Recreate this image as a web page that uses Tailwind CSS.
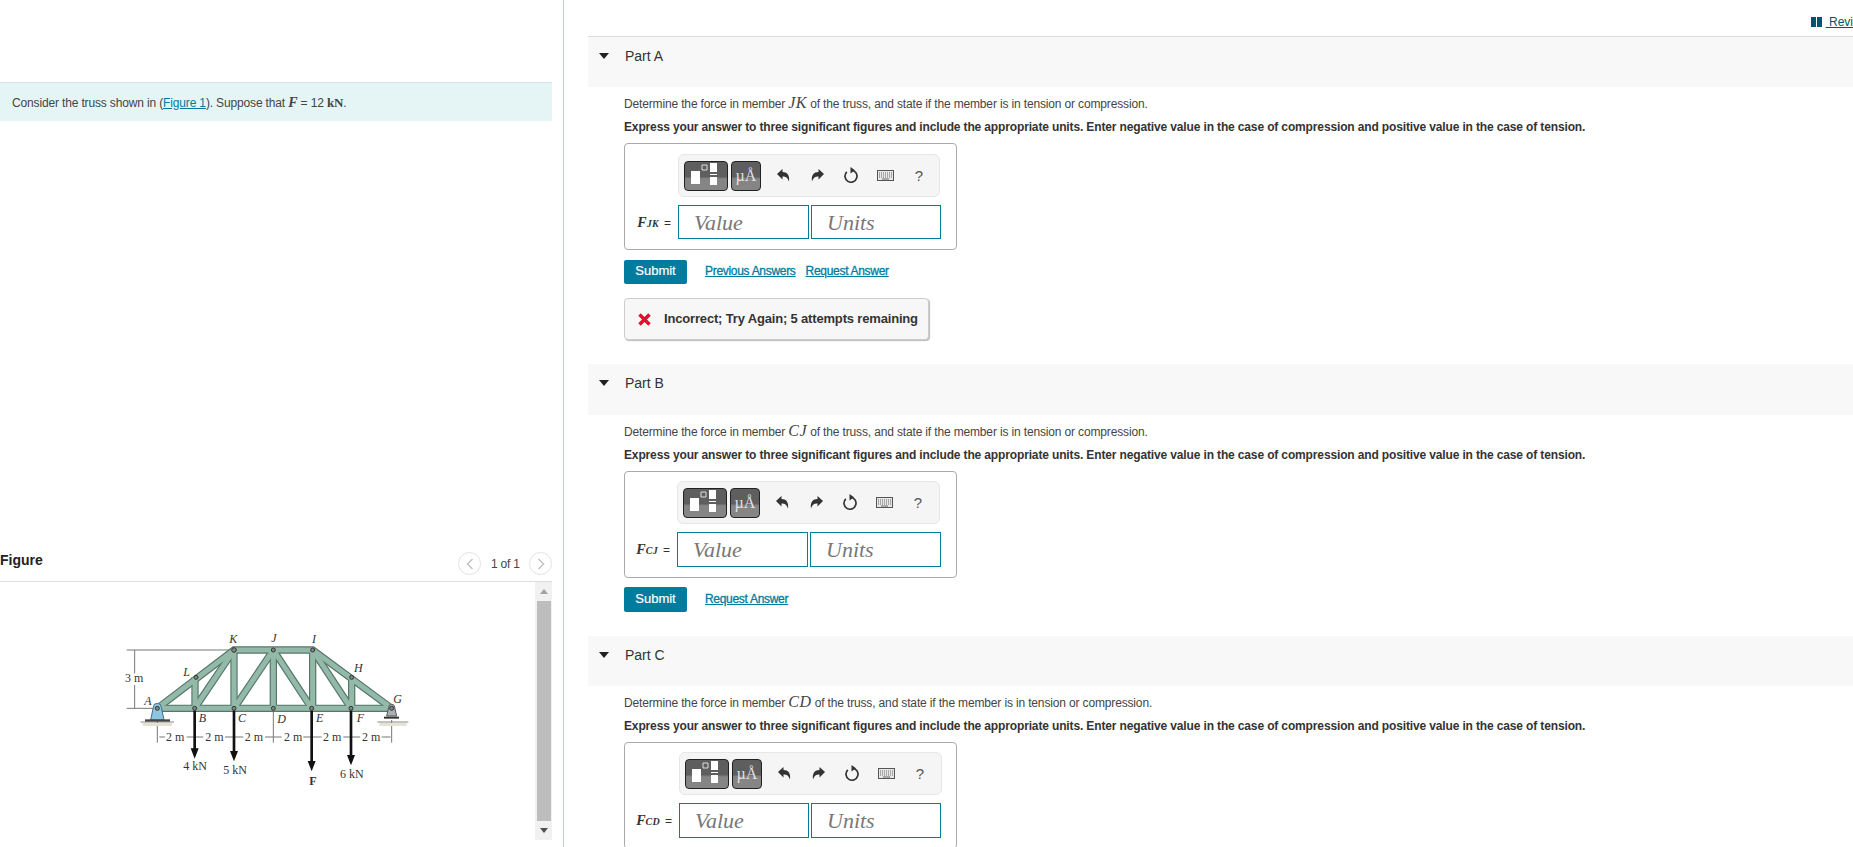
<!DOCTYPE html>
<html lang="en">
<head>
    <meta charset="UTF-8">
    <title>Truss homework</title>
    <script src="https://cdn.jsdelivr.net/npm/@tailwindcss/browser@4"></script>
</head>
<body class="bg-white text-[#444] font-['Liberation_Sans',Arial,sans-serif] text-[12px]">
<div class="flex h-[847px] overflow-hidden">

    <!-- Left column -->
    <aside class="w-[564px] shrink-0 border-r border-[#b9cbe0] pr-[11px] pt-[82px]">
        <div class="h-[39px] bg-[#e5f5f6] border-t border-[#d5e3e5] pl-[12px] flex items-center">
            <p class="tracking-[-0.15px]">Consider the truss shown in (<a class="text-[#007c9e] underline">Figure 1</a>). Suppose that <span class="font-['Liberation_Serif',serif] italic font-bold text-[14px]">F</span> = 12 <span class="font-['Liberation_Serif',serif] font-bold text-[13px]">kN</span>.</p>
        </div>

        <div class="mt-[425px] h-[36px] border-b border-[#ddd] flex items-center justify-between">
            <h2 class="text-[14px] font-bold text-[#222] pb-[6px]">Figure</h2>
            <div class="flex items-center">
                <span class="w-[23px] h-[23px] rounded-full border border-[#e2e2e2] flex items-center justify-center">
                    <svg width="8" height="12" viewBox="0 0 8 12" fill="none" stroke="#c4c4c4" stroke-width="1.6"><path d="M6.5 1 1.5 6l5 5"/></svg>
                </span>
                <span class="mx-[10px] w-[28px] whitespace-nowrap tracking-[-0.2px]">1 of 1</span>
                <span class="w-[23px] h-[23px] rounded-full border border-[#e2e2e2] flex items-center justify-center">
                    <svg width="8" height="12" viewBox="0 0 8 12" fill="none" stroke="#c4c4c4" stroke-width="1.6"><path d="M1.5 1l5 5-5 5"/></svg>
                </span>
            </div>
        </div>

        <div class="flex h-[258px]">
            <div class="flex-1 pl-[100px] pt-[38px]">
                <svg width="320" height="180" viewBox="0 0 960 540">
                    <defs>
                        <g id="members">
                            <path d="M172 265H875"/>
                            <path d="M285 172V265M402 90V265M520 90V265M638 90V265M755 172V265"/>
                            <path d="M284 265 402 90M402 265 520 90M520 90 635 265M638 90 753 265"/>
                            <path d="M172 265 402 90H638L875 265"/>
                        </g>
                    </defs>
                    <!-- dimension lines -->
                    <g stroke="#777" stroke-width="3" fill="none">
                        <path d="M80 90H395M80 265H170M104 90V160M104 195V265"/>
                        <path d="M172 300V368M875 300V368M520 275V368M178 351H195M260 351H310M375 351H430M495 351H545M610 351H665M730 351H780M845 351H872"/>
                    </g>
                    <!-- ground -->
                    <path d="M122 306H222M832 306H925" stroke="#8a8a7c" stroke-width="3"/>
                    <path d="M128 309H216V318H128ZM838 309H920V318H838Z" fill="#e4e2d4"/>
                    <!-- truss -->
                    <use href="#members" fill="none" stroke="#56766b" stroke-width="22"/>
                    <use href="#members" fill="none" stroke="#93b9a9" stroke-width="15"/>
                    <!-- supports -->
                    <path d="M160 262a12 12 0 0 1 24 0l8 38h-40Z" fill="#8fc6df" stroke="#3f6f86" stroke-width="3"/>
                    <path d="M135 298H210V305H135Z" fill="#444"/>
                    <path d="M866 262a9 9 0 0 1 18 0l6 26h-30Z" fill="#a9b1b5" stroke="#555" stroke-width="3"/>
                    <path d="M852 290H897V296H852Z" fill="#333"/>
                    <g fill="#7c8a86" stroke="#333" stroke-width="3">
                        <circle cx="172" cy="265" r="6"/><circle cx="288" cy="172" r="6"/><circle cx="402" cy="90" r="7"/>
                        <circle cx="520" cy="90" r="6"/><circle cx="638" cy="90" r="6"/><circle cx="755" cy="172" r="6"/>
                        <circle cx="875" cy="265" r="6"/><circle cx="284" cy="265" r="6"/><circle cx="402" cy="265" r="6"/>
                        <circle cx="520" cy="265" r="6"/><circle cx="635" cy="265" r="6"/><circle cx="753" cy="265" r="6"/>
                    </g>
                    <!-- loads -->
                    <g stroke="#111" stroke-width="8">
                        <path d="M284 272V392M402 272V400M635 272V430M753 272V412"/>
                    </g>
                    <path d="M272 385H296L284 416ZM390 393H414L402 424ZM623 423H647L635 454ZM741 405H765L753 436Z" fill="#111"/>
                    <g font-family="Liberation Serif, serif" font-size="36" fill="#333">
                        <text x="75" y="186">3 m</text>
                        <text x="198" y="362">2 m</text>
                        <text x="316" y="362">2 m</text>
                        <text x="434" y="362">2 m</text>
                        <text x="552" y="362">2 m</text>
                        <text x="669" y="362">2 m</text>
                        <text x="786" y="362">2 m</text>
                        <text x="250" y="449">4 kN</text>
                        <text x="370" y="462">5 kN</text>
                        <text x="720" y="473">6 kN</text>
                        <text x="628" y="495" font-weight="bold">F</text>
                        <g font-style="italic">
                            <text x="133" y="254">A</text>
                            <text x="296" y="305">B</text>
                            <text x="414" y="305">C</text>
                            <text x="532" y="308">D</text>
                            <text x="648" y="305">E</text>
                            <text x="770" y="305">F</text>
                            <text x="880" y="248">G</text>
                            <text x="762" y="155">H</text>
                            <text x="636" y="68">I</text>
                            <text x="514" y="66">J</text>
                            <text x="388" y="68">K</text>
                            <text x="250" y="168">L</text>
                        </g>
                    </g>
                </svg>
            </div>
            <!-- scrollbar -->
            <div class="w-[17px] bg-[#f1f1f1] flex flex-col items-center justify-between py-[7px]">
                <svg width="8" height="5" viewBox="0 0 8 5"><path d="M4 0 8 5H0Z" fill="#a3a3a3"/></svg>
                <div class="w-[14px] h-[220px] bg-[#bdbdbd]"></div>
                <svg width="8" height="5" viewBox="0 0 8 5"><path d="M0 0H8L4 5Z" fill="#505050"/></svg>
            </div>
        </div>
    </aside>

    <!-- Right column -->
    <main class="flex-1 min-w-0 pl-[24px]">
        <div class="h-[36px] -ml-[24px] flex justify-end items-start pt-[15px]">
            <a class="flex items-center text-[12px] leading-[14px] text-[#00566e] underline">
                <svg class="mr-[4px]" width="11" height="10" viewBox="0 0 11 10"><path d="M0 0H5V10H0ZM6 0H11V10H6Z" fill="#00566e"/></svg>
                <span>&nbsp;Revi</span>
            </a>
        </div>
        <div id="parts"></div>
    </main>
</div>

<script>
    // small per-part offsets, the three answer boxes don't line up exactly in the original
    const parts = [
        { name: "Part A", member: "JK", links: ["Previous Answers", "Request Answer"], wrong: true, head: "h-[51px] border-t border-[#ddd]",
          barTop: "mt-[10px]", label: "w-[53px]", barW: "w-[262px]", inputH: "h-[34px]", valueW: "w-[131px]", unitsW: "w-[130px]", submitTop: "mt-[10px]", submitH: "h-[24px]" },
        { name: "Part B", member: "CJ", links: ["Request Answer"], wrong: false, head: "h-[51px]",
          barTop: "mt-[9px]", label: "w-[52px]", barW: "w-[263px]", inputH: "h-[35px]", valueW: "w-[131px]", unitsW: "w-[131px]", submitTop: "mt-[9px]", submitH: "h-[25px]" },
        // the page is cut off below the inputs of part C
        { name: "Part C", member: "CD", links: [], wrong: false, cut: true, head: "h-[50px]",
          barTop: "mt-[9px]", label: "w-[54px]", barW: "w-[263px]", inputH: "h-[35px]", valueW: "w-[130px]", unitsW: "w-[130px]" }
    ];

    function toolbar(part) {
        return `
        <div class="${part.label} pr-0"></div>
        <div class="${part.barW} h-[43px] bg-[#f5f5f5] border border-[#e6e6e6] rounded-[6px] flex items-center pl-[5px]">
            <span class="w-[44px] h-[30px] rounded-[4px] border border-[#222] bg-[linear-gradient(#5e5e5e_52%,#858585_60%)] shrink-0">
                <svg width="42" height="28" viewBox="0 0 42 28"><path d="M6 9H15V22H6ZM25 1H32V10H25ZM25 12H32V13H25ZM25 15H32V23H25Z" fill="#fff"/><path d="M17 3H22V8H17Z" fill="none" stroke="#ddd"/></svg>
            </span>
            <span class="ml-[3px] w-[30px] h-[30px] rounded-[4px] border border-[#222] bg-[linear-gradient(#5e5e5e_52%,#858585_60%)] shrink-0 flex items-center justify-center font-['Liberation_Serif',serif] text-[16px] leading-none text-[#e2e2e2]">µÅ</span>
            <span class="ml-[5px] w-[34px] flex justify-center">
                <svg width="13" height="13" viewBox="0 0 13 13"><path d="M0 5 5.500 0V3C10 3 13 6 12 12.500 10.500 8.500 9 7.500 5.500 7.500V10.500Z" fill="#333"/></svg>
            </span>
            <span class="w-[34px] flex justify-center">
                <svg width="13" height="13" viewBox="0 0 13 13"><path d="M13 5 7.500 0V3C3 3 0 6 1 12.500 2.500 8.500 4 7.500 7.500 7.500V10.500Z" fill="#333"/></svg>
            </span>
            <span class="w-[34px] flex justify-center">
                <svg width="15" height="17" viewBox="0 0 15 17" fill="none"><path d="M7 3.200A6 6 0 1 1 2.800 4.900" stroke="#333" stroke-width="1.700"/><path d="M6.500 0 11 3.200 6.500 6.500Z" fill="#333"/></svg>
            </span>
            <span class="w-[34px] flex justify-center">
                <svg width="17" height="11" viewBox="0 0 17 11"><rect x=".5" y=".5" width="16" height="10" fill="#e8e8e8" stroke="#555"/><path d="M2 3H15M2 5H15M2 7H15" stroke="#666" stroke-dasharray="1 1"/><path d="M5 9H12" stroke="#666"/></svg>
            </span>
            <span class="w-[34px] text-center text-[15px] leading-none text-[#555]">?</span>
        </div>`;
    }

    function renderParts() {
        const box = document.getElementById("parts");
        parts.forEach(part => {
            const div = document.createElement("section");
            div.className = "mb-[24px]";
            div.innerHTML = `
                <div class="${part.head} bg-[#f8f8f8] flex items-start pt-[10px]">
                    <svg class="ml-[11px] mt-[6px]" width="10" height="6" viewBox="0 0 10 6"><path d="M0 0H10L5 6Z" fill="#222"/></svg>
                    <span class="ml-[16px] text-[14px] leading-[18px] text-[#333]">${part.name}</span>
                </div>
                <div class="pl-[36px]">
                    <p class="mt-[10px] h-[14px] leading-[14px] tracking-[-0.15px]">Determine the force in member <span class="font-['Liberation_Serif',serif] italic text-[16px] leading-[10px] tracking-[0.5px]">${part.member}</span> of the truss, and state if the member is in tension or compression.</p>
                    <p class="mt-[9px] h-[14px] leading-[14px] font-bold tracking-[-0.14px] text-[#333]">Express your answer to three significant figures and include the appropriate units. Enter negative value in the case of compression and positive value in the case of tension.</p>
                    <div class="mt-[9px] w-[333px] h-[107px] border border-[#aaa] rounded-[4px]">
                        <div class="flex ${part.barTop}">${toolbar(part)}</div>
                        <div class="flex items-center mt-[8px]">
                            <span class="${part.label} pr-[7px] text-right whitespace-nowrap text-[#333]"><span class="font-['Liberation_Serif',serif] italic font-bold text-[14px]">F</span><span class="font-['Liberation_Serif',serif] italic font-bold text-[10px] tracking-[0.3px]">${part.member}</span><span class="ml-[5px]">=</span></span>
                            <div class="${part.valueW} ${part.inputH} border border-[#007c9e] pl-[15px] flex items-center font-['Liberation_Serif',serif] italic text-[22px] text-[#777]">Value</div>
                            <div class="ml-[2px] ${part.unitsW} ${part.inputH} border border-[#007c9e] pl-[15px] flex items-center font-['Liberation_Serif',serif] italic text-[22px] text-[#777]">Units</div>
                        </div>
                    </div>
                    ${part.cut ? "" : `
                    <div class="${part.submitTop} flex items-center">
                        <button class="w-[63px] ${part.submitH} pb-[2px] bg-[#007c9e] rounded-[2px] text-white text-[13px] [-webkit-text-stroke:0.2px]">Submit</button>
                        <span class="ml-[18px] pb-[2px] flex gap-[10px]">
                            ${part.links.map(l => `<a class="text-[#007c9e] underline tracking-[-0.3px] [-webkit-text-stroke:0.3px]">${l}</a>`).join("")}
                        </span>
                    </div>`}
                    ${part.wrong ? `
                    <div class="mt-[14px] w-[305px] h-[42px] bg-[#f7f7f7] border border-[#ccc] rounded-[4px] shadow-[1px_1px_1px_#bbb] flex items-center pl-[13px]">
                        <svg width="13" height="13" viewBox="0 0 13 13"><path d="M1.500 1.500 11.500 11.500M11.500 1.500 1.500 11.500" stroke="#e0102f" stroke-width="3.500"/></svg>
                        <span class="ml-[13px] text-[13px] font-bold tracking-[-0.17px] text-[#333] whitespace-nowrap">Incorrect; Try Again; 5 attempts remaining</span>
                    </div>` : ""}
                </div>
            `;
            box.appendChild(div);
        });
    }

    renderParts();
</script>
</body>
</html>
